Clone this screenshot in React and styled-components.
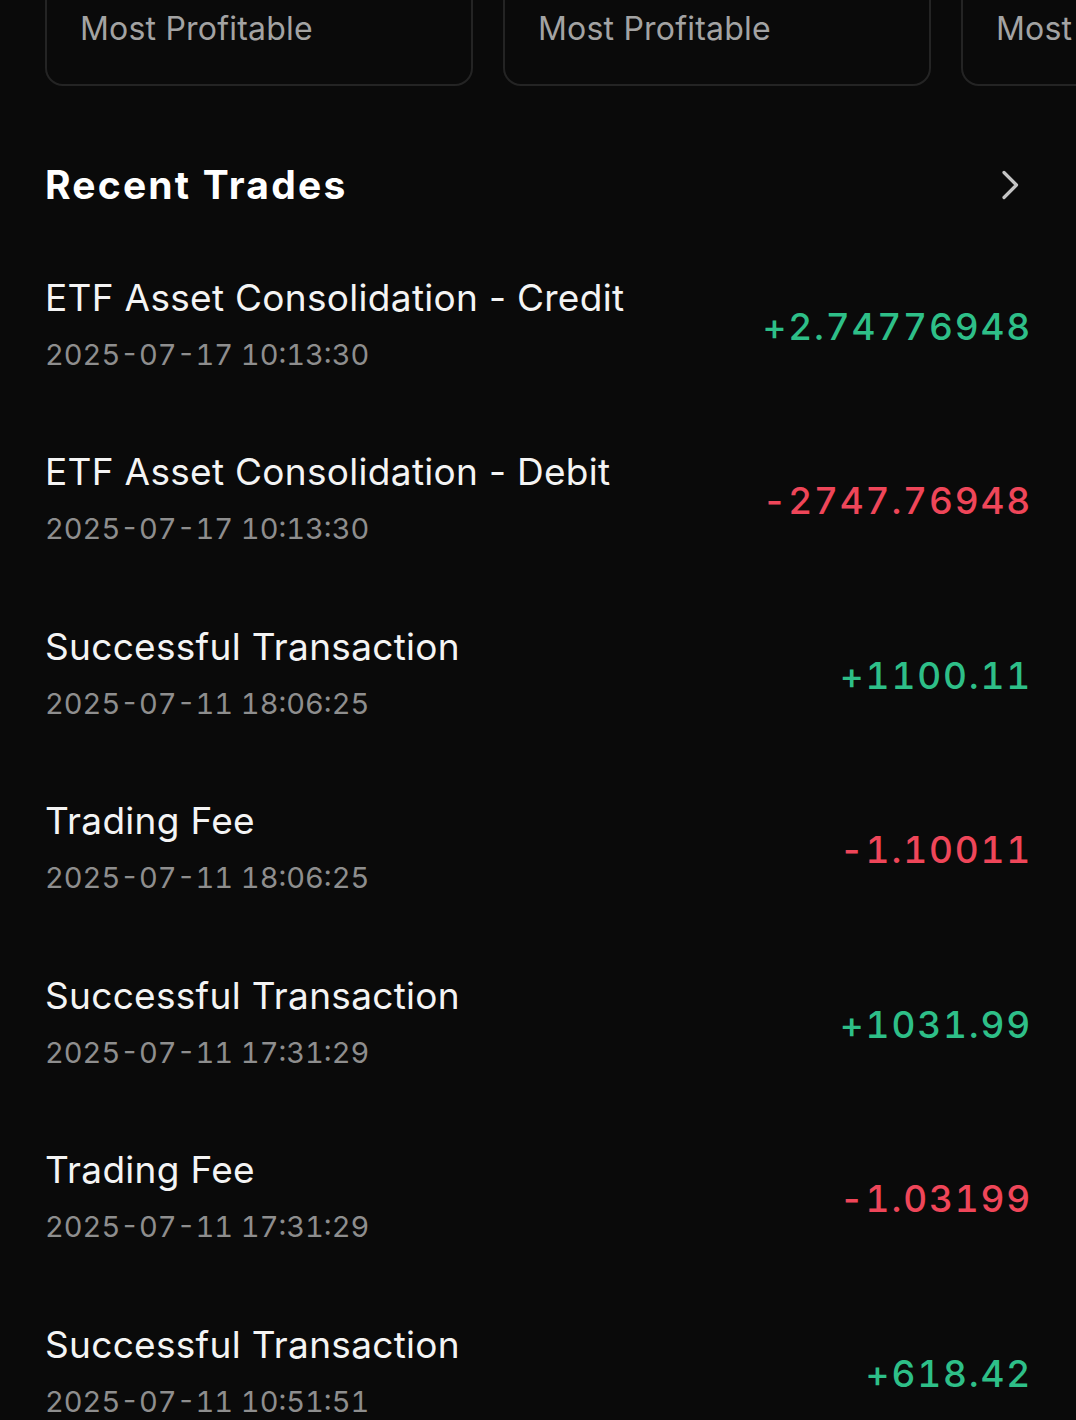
import React from "react";
import styled, { createGlobalStyle } from "styled-components";

const Global = createGlobalStyle`
  html, body {
    margin: 0;
    padding: 0;
    background: #0a0a0a;
    overflow-x: hidden;
  }
  body {
    font-family: Inter, "Noto Sans", "Liberation Sans", sans-serif;
    -webkit-font-smoothing: antialiased;
  }
`;

const Page = styled.div`
  width: 1076px;
  min-height: 1420px;
  background: #0a0a0a;
  overflow: hidden;
`;

const CardStrip = styled.div`
  display: flex;
  gap: 30px;
  padding-left: 45px;
  margin-top: -50px;
`;

const StatCard = styled.div`
  flex: 0 0 428px;
  height: 136px;
  box-sizing: border-box;
  border: 2px solid #242424;
  border-radius: 18px;
  padding: 55px 0 0 33px;
  overflow: hidden;
`;

const StatLabel = styled.div`
  font-size: 32px;
  line-height: 44px;
  color: #a3a3a3;
  letter-spacing: 0.2px;
  white-space: nowrap;
`;

const SectionHeader = styled.div`
  display: flex;
  align-items: center;
  justify-content: space-between;
  padding: 0 46px 0 45px;
  margin-top: 75px;
  height: 48px;
`;

const SectionTitle = styled.h2`
  margin: 0;
  font-size: 39px;
  line-height: 48px;
  font-weight: 700;
  color: #ffffff;
  letter-spacing: 2.2px;
`;

const MoreButton = styled.button`
  display: flex;
  align-items: center;
  justify-content: center;
  width: 40px;
  height: 40px;
  padding: 0;
  border: none;
  background: transparent;
  color: #c4c4c4;
`;

const TradeList = styled.div`
  display: flex;
  flex-direction: column;
  margin-top: 29px;
`;

const TradeRow = styled.div`
  display: flex;
  align-items: center;
  justify-content: space-between;
  height: 174.5px;
  padding: 0 44px 0 45px;
  box-sizing: border-box;
`;

const TradeInfo = styled.div`
  display: flex;
  flex-direction: column;
`;

const TradeTitle = styled.div`
  font-size: 37px;
  line-height: 44px;
  color: #f4f4f4;
  letter-spacing: 0.3px;
`;

const TradeTime = styled.div`
  margin-top: 15px;
  font-size: 29px;
  line-height: 40px;
  color: #8e8e8e;
  font-variant-numeric: tabular-nums;
`;

const Amount = styled.div`
  font-size: 37px;
  line-height: 44px;
  font-weight: 500;
  letter-spacing: 1.8px;
  margin-top: 3px;
  font-variant-numeric: tabular-nums;
  color: ${(p) => (p.$positive ? "#2ebf88" : "#ef4659")};
`;

const trades = [
  { title: "ETF Asset Consolidation - Credit", time: "2025-07-17 10:13:30", amount: "+2.74776948" },
  { title: "ETF Asset Consolidation - Debit", time: "2025-07-17 10:13:30", amount: "-2747.76948" },
  { title: "Successful Transaction", time: "2025-07-11 18:06:25", amount: "+1100.11" },
  { title: "Trading Fee", time: "2025-07-11 18:06:25", amount: "-1.10011" },
  { title: "Successful Transaction", time: "2025-07-11 17:31:29", amount: "+1031.99" },
  { title: "Trading Fee", time: "2025-07-11 17:31:29", amount: "-1.03199" },
  { title: "Successful Transaction", time: "2025-07-11 10:51:51", amount: "+618.42" },
];

export default function App() {
  return (
    <Page>
      <Global />
      <CardStrip>
        <StatCard>
          <StatLabel>Most Profitable</StatLabel>
        </StatCard>
        <StatCard>
          <StatLabel>Most Profitable</StatLabel>
        </StatCard>
        <StatCard>
          <StatLabel>Most Profitable</StatLabel>
        </StatCard>
      </CardStrip>
      <SectionHeader>
        <SectionTitle>Recent Trades</SectionTitle>
        <MoreButton aria-label="More">
          <svg width="20" height="30" viewBox="0 0 20 30" fill="none">
            <path d="M4 2.5 L16.5 15 L4 27.5" stroke="currentColor" strokeWidth="3.2" strokeLinecap="round" strokeLinejoin="round" />
          </svg>
        </MoreButton>
      </SectionHeader>
      <TradeList>
        {trades.map((t, i) => (
          <TradeRow key={i}>
            <TradeInfo>
              <TradeTitle>{t.title}</TradeTitle>
              <TradeTime>{t.time}</TradeTime>
            </TradeInfo>
            <Amount $positive={t.amount.startsWith("+")}>{t.amount}</Amount>
          </TradeRow>
        ))}
      </TradeList>
    </Page>
  );
}
